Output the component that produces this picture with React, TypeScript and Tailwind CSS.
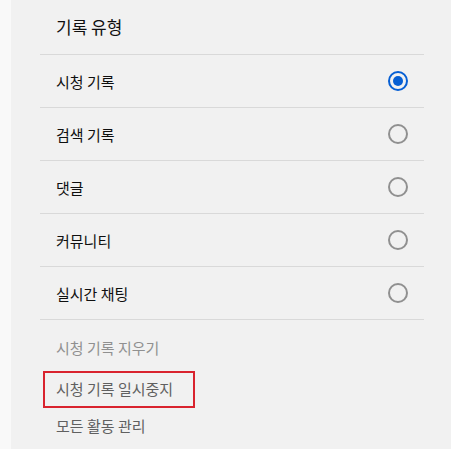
import React from 'react';

interface Option {
  id: number;
  label: string;
  checked: boolean;
}

const font = { fontFamily: '"Malgun Gothic", "Noto Sans CJK KR", "Noto Sans", sans-serif' };

function Radio({ checked }: { checked: boolean }) {
  return (
    <span
      className={`flex h-[20px] w-[20px] items-center justify-center rounded-full border-2 ${
        checked ? 'border-[#065fd4]' : 'border-[#909090]'
      }`}
    >
      {checked && <span className="h-[10px] w-[10px] rounded-full bg-[#065fd4]" />}
    </span>
  );
}

export default function App() {
  const options: Option[] = [
    { id: 1, label: '시청 기록', checked: true },
    { id: 2, label: '검색 기록', checked: false },
    { id: 3, label: '댓글', checked: false },
    { id: 4, label: '커뮤니티', checked: false },
    { id: 5, label: '실시간 채팅', checked: false },
  ];

  return (
    <div className="flex h-[449px] w-[451px] overflow-hidden" style={font}>
      {/* 왼쪽 여백 */}
      <div className="w-[11px] bg-[#f9f9f9]" />

      <div className="flex-1 bg-[#f1f1f1] pl-[29px] pr-[27px]">
        {/* 제목 */}
        <div className="flex h-[55px] items-center border-b border-[#d9d9d9] pb-[1px] pl-[16px] text-[17px] leading-none text-[#0f0f0f]">
          기록 유형
        </div>

        {/* 옵션 목록 */}
        {options.map((o) => (
          <div
            key={o.id}
            className="flex h-[53px] items-center justify-between border-b border-[#d9d9d9] pl-[16px] pr-[16px]"
          >
            <span className="text-[15px] leading-none text-[#0f0f0f]">{o.label}</span>
            <Radio checked={o.checked} />
          </div>
        ))}

        {/* 링크 */}
        <div className="flex flex-col pt-[7px]">
          <div className="flex h-[40px] items-center pl-[16px] text-[15px] leading-none text-[#909090]">
            시청 기록 지우기
          </div>
          <div className="ml-[3px] mt-[4px] flex h-[37px] w-[152px] items-center border-2 border-[#d9232e] pb-[3px] pl-[11px] text-[15px] leading-none text-[#606060]">
            시청 기록 일시중지
          </div>
          <div className="flex h-[34px] items-center pl-[16px] text-[15px] leading-none text-[#606060]">
            모든 활동 관리
          </div>
        </div>
      </div>
    </div>
  );
}
